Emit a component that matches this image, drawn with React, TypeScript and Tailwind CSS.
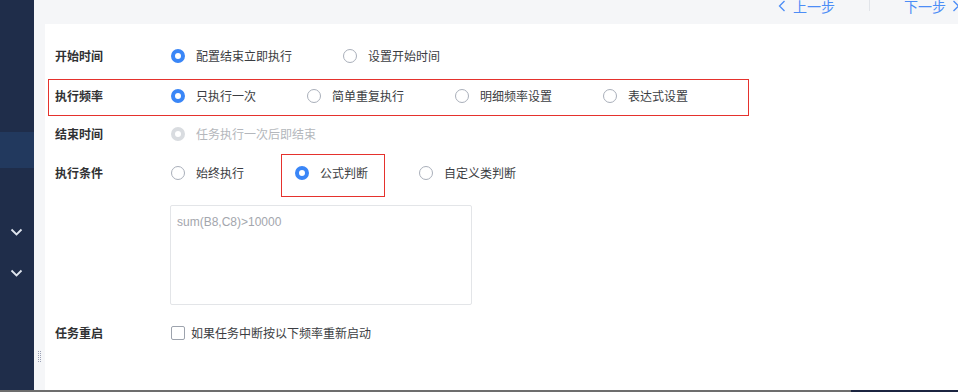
import { ReactNode } from "react";

const font = { fontFamily: '"Noto Sans CJK SC", "Noto Sans", sans-serif' };

function Radio({ state }: { state: "on" | "off" | "disabled" }) {
  if (state === "on") {
    return <span className="box-border block h-[14px] w-[14px] shrink-0 rounded-full border-[4px] border-[#3a86f7] bg-white" />;
  }
  if (state === "disabled") {
    return <span className="box-border block h-[14px] w-[14px] shrink-0 rounded-full border-[4px] border-[#d9dce0] bg-white" />;
  }
  return <span className="box-border block h-[14px] w-[14px] shrink-0 rounded-full border border-[#a9afba] bg-white" />;
}

function Option({
  label,
  state = "off",
  width,
  children,
}: {
  label: string;
  state?: "on" | "off" | "disabled";
  width: string;
  children?: ReactNode;
}) {
  return (
    <div className={`relative flex h-[14px] shrink-0 items-center gap-[11px] ${width}`}>
      {children}
      <Radio state={state} />
      <span className={`whitespace-nowrap text-[12px] leading-[14px] ${state === "disabled" ? "text-[#b4b7bc]" : "text-[#3b3d42]"}`}>
        {label}
      </span>
    </div>
  );
}

function Label({ children }: { children: ReactNode }) {
  return <div className="w-[116px] shrink-0 text-[12px] font-semibold leading-[14px] text-[#303133]">{children}</div>;
}

function Chevron({ dir }: { dir: "left" | "right" | "down" }) {
  if (dir === "down") {
    return (
      <svg width="13" height="8" viewBox="0 0 13 8" className="block">
        <polyline points="1.5,1.5 6.5,6.5 11.5,1.5" fill="none" stroke="#dfe5ee" strokeWidth="1.8" />
      </svg>
    );
  }
  return (
    <svg width="8" height="12" viewBox="0 0 8 12" className="block shrink-0">
      <polyline
        points={dir === "left" ? "6.5,1 1.5,6 6.5,11" : "1.5,1 6.5,6 1.5,11"}
        fill="none"
        stroke="#4c8df6"
        strokeWidth="1.3"
      />
    </svg>
  );
}

export default function App() {
  return (
    <div className="flex h-[392px] w-[958px] flex-col overflow-hidden bg-white" style={font}>
      <div className="flex min-h-0 flex-1">
        <aside className="flex w-[34px] shrink-0 flex-col bg-[#1f2d4a]">
          <div className="mt-[132px] h-[36px] bg-[#22395e]" />
          <div className="ml-[10px] mt-[60px]">
            <Chevron dir="down" />
          </div>
          <div className="ml-[10px] mt-[33px]">
            <Chevron dir="down" />
          </div>
        </aside>

        <div className="flex w-[11px] shrink-0 flex-col bg-[#f5f6f8]">
          <div className="ml-[4px] mt-[351px] flex gap-[1px]">
            {[0, 1].map((c) => (
              <div key={c} className="flex flex-col gap-[1px]">
                {[0, 1, 2, 3, 4, 5].map((r) => (
                  <span key={r} className="block h-[1px] w-[1px] bg-[#9aa0b4]" />
                ))}
              </div>
            ))}
          </div>
        </div>

        <div className="flex min-w-0 flex-1 flex-col overflow-hidden bg-[#f5f6f8]">
          <div className="flex h-[24px] shrink-0 items-start whitespace-nowrap">
            <div className="ml-[733px] mt-[-1px] flex shrink-0 items-center gap-[7px]">
              <Chevron dir="left" />
              <span className="text-[14px] leading-[14px] text-[#4c8df6]">上一步</span>
            </div>
            <div className="ml-[34px] h-[11px] w-px shrink-0 bg-[#e1e4e9]" />
            <div className="ml-[34px] mt-[-1px] flex shrink-0 items-center gap-[6px]">
              <span className="text-[14px] leading-[14px] text-[#4c8df6]">下一步</span>
              <Chevron dir="right" />
            </div>
          </div>

          <main className="flex flex-1 flex-col bg-white pl-[10px] pt-[13px]">
            <div className="flex h-[38px] items-center">
              <Label>开始时间</Label>
              <Option label="配置结束立即执行" state="on" width="w-[172px]" />
              <Option label="设置开始时间" width="w-[150px]" />
            </div>

            <div className="ml-[-7px] mt-[4px] box-border flex h-[37px] w-[701px] items-center border border-[#e5322d] pb-[4px] pl-[6px]">
              <Label>执行频率</Label>
              <Option label="只执行一次" state="on" width="w-[136px]" />
              <Option label="简单重复执行" width="w-[148px]" />
              <Option label="明细频率设置" width="w-[148px]" />
              <Option label="表达式设置" width="w-[120px]" />
            </div>

            <div className="flex h-[36px] items-center">
              <Label>结束时间</Label>
              <Option label="任务执行一次后即结束" state="disabled" width="w-[200px]" />
            </div>

            <div className="flex h-[41px] items-center">
              <Label>执行条件</Label>
              <Option label="始终执行" width="w-[124px]" />
              <Option label="公式判断" state="on" width="w-[124px]">
                <span className="pointer-events-none absolute left-[-14px] top-[-12px] box-border h-[43px] w-[104px] border border-[#e5322d]" />
              </Option>
              <Option label="自定义类判断" width="w-[120px]" />
            </div>

            <div className="ml-[115px] mt-[12px] box-border h-[100px] w-[302px] rounded-[2px] border border-[#e3e5e8] px-[6px] pt-[8px] text-[12px] leading-[14px]">
              <span className="text-[#a3a6ad]" style={{ fontFamily: '"Liberation Sans", Arial, sans-serif' }}>
                sum(B8,C8)&gt;10000
              </span>
            </div>

            <div className="mt-[13px] flex h-[30px] items-center">
              <Label>任务重启</Label>
              <div className="flex items-center gap-[6px]">
                <span className="box-border block h-[14px] w-[14px] rounded-[2px] border border-[#9da3ad] bg-white" />
                <span className="text-[12px] leading-[14px] text-[#3b3d42]">如果任务中断按以下频率重新启动</span>
              </div>
            </div>
          </main>
        </div>
      </div>

      <div className="flex h-[2px] shrink-0">
        <div className="w-[851px] bg-[#6d6d6d]" />
        <div className="flex-1 bg-[#1b2440]" />
      </div>
    </div>
  );
}
